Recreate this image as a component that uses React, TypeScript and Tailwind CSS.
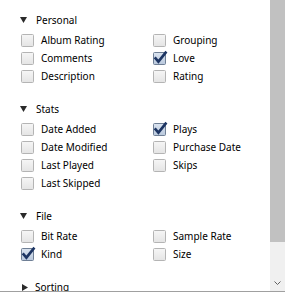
import React from "react";

type Item = { label: string; checked?: boolean } | null;

const CheckBox = ({ checked }: { checked?: boolean }) =>
  checked ? (
    <svg width="13" height="13" viewBox="0 0 13 13" className="overflow-visible shrink-0">
      <defs>
        <linearGradient id="cg" x1="0" y1="0" x2="0" y2="1">
          <stop offset="0" stopColor="#dbe4f0" />
          <stop offset="1" stopColor="#b9c8dc" />
        </linearGradient>
      </defs>
      <rect x="0.5" y="0.5" width="12" height="12" rx="1" fill="url(#cg)" stroke="#6f7f95" />
      <path d="M2.6 6.4 L5.4 9.6 L12.6 0.6" fill="none" stroke="#1d3563" strokeWidth="2.6" strokeLinecap="square" />
    </svg>
  ) : (
    <svg width="13" height="13" viewBox="0 0 13 13" className="shrink-0">
      <defs>
        <linearGradient id="ug" x1="0" y1="0" x2="0" y2="1">
          <stop offset="0" stopColor="#f6f6f6" />
          <stop offset="1" stopColor="#e4e4e4" />
        </linearGradient>
      </defs>
      <rect x="0.5" y="0.5" width="12" height="12" rx="1" fill="url(#ug)" stroke="#b4b4b4" />
    </svg>
  );

const Row = ({ item }: { item: Item }) =>
  item ? (
    <div className="flex items-center h-[18px] gap-[7px]">
      <CheckBox checked={item.checked} />
      <span className="leading-none whitespace-nowrap">{item.label}</span>
    </div>
  ) : (
    <div className="h-[18px]" />
  );

const Header = ({ title, open = true }: { title: string; open?: boolean }) => (
  <div className="flex items-center h-[18px]">
    {open ? (
      <svg width="7" height="6" viewBox="0 0 7 6" className="ml-[20px] mr-[9px]">
        <path d="M0 0 L7 0 L3.5 6 Z" fill="#2a2a2a" />
      </svg>
    ) : (
      <svg width="6" height="7" viewBox="0 0 6 7" className="ml-[22px] mr-[7px]">
        <path d="M0 0 L6 3.5 L0 7 Z" fill="#2a2a2a" />
      </svg>
    )}
    <span className="leading-none">{title}</span>
  </div>
);

const Section = ({ title, rows }: { title: string; rows: [Item, Item][] }) => (
  <div className="mb-[15px]">
    <Header title={title} />
    <div className="mt-[2px] pl-[21px] grid grid-cols-[132px_1fr]">
      {rows.map((r, i) => (
        <React.Fragment key={i}>
          <Row item={r[0]} />
          <Row item={r[1]} />
        </React.Fragment>
      ))}
    </div>
  </div>
);

export default function App() {
  return (
    <div
      className="w-[285px] h-[294px] bg-white overflow-hidden text-[10px] text-black"
      style={{ fontFamily: '"Noto Sans", "Open Sans", sans-serif' }}
    >
      <div className="flex h-[292px] border-b border-[#a0a0a0]">
        <div className="flex-1 overflow-hidden pt-[11px]">
          <Section
            title="Personal"
            rows={[
              [{ label: "Album Rating" }, { label: "Grouping" }],
              [{ label: "Comments" }, { label: "Love", checked: true }],
              [{ label: "Description" }, { label: "Rating" }],
            ]}
          />
          <Section
            title="Stats"
            rows={[
              [{ label: "Date Added" }, { label: "Plays", checked: true }],
              [{ label: "Date Modified" }, { label: "Purchase Date" }],
              [{ label: "Last Played" }, { label: "Skips" }],
              [{ label: "Last Skipped" }, null],
            ]}
          />
          <Section
            title="File"
            rows={[
              [{ label: "Bit Rate" }, { label: "Sample Rate" }],
              [{ label: "Kind", checked: true }, { label: "Size" }],
            ]}
          />
          <Header title="Sorting" open={false} />
        </div>
        <div className="w-[15px] flex flex-col bg-[#f0f0f0]">
          <div className="h-[242px] bg-[#c1c1c1]" />
          <div className="flex-1 flex items-end justify-center pb-[6px]">
            <svg width="7" height="4" viewBox="0 0 7 4">
              <path d="M0.5 0.5 L3.5 3.5 L6.5 0.5" fill="none" stroke="#606060" strokeWidth="1" />
            </svg>
          </div>
        </div>
      </div>
    </div>
  );
}
